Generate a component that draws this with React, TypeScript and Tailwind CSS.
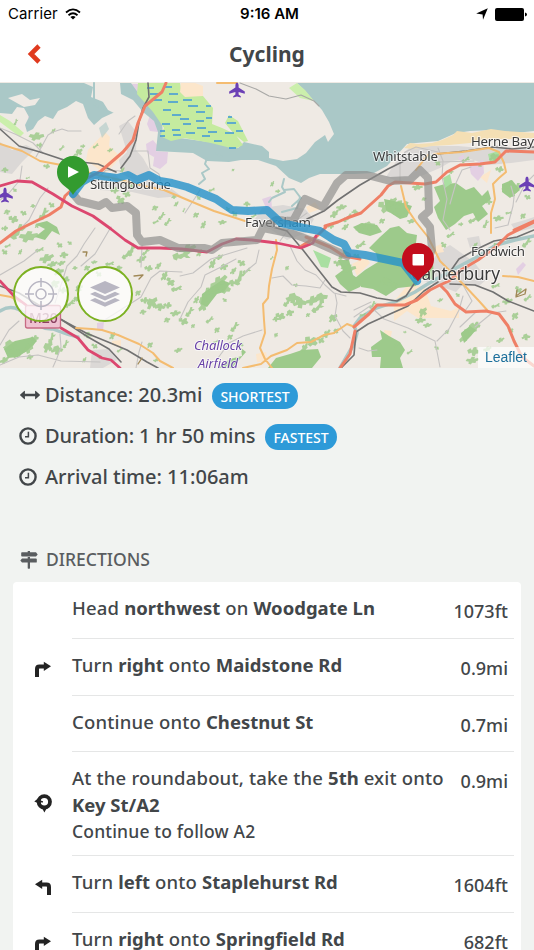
import React from 'react';

type IconProps = { className?: string };

interface Step {
  icon?: React.FC<IconProps>;
  text: React.ReactNode;
  note?: string;
  distance: string;
}

const ArrowsH = ({ className }: IconProps) => (
  <svg viewBox="0 0 22 22" className={className} fill="currentColor">
    <path d="M1.3 10.4 5.2 6.9Q5.9 6.5 5.9 7.3V9.7H16.1V7.3Q16.1 6.5 16.8 6.9L20.7 10.4Q21.3 11 20.7 11.6L16.8 15.1Q16.1 15.5 16.1 14.7V12.3H5.9V14.7Q5.9 15.5 5.2 15.1L1.3 11.6Q.7 11 1.3 10.4Z" />
  </svg>
);

const Clock = ({ className }: IconProps) => (
  <svg viewBox="0 0 18 18" className={className} fill="none" stroke="currentColor">
    <circle cx="9" cy="9" r="7.6" strokeWidth="2.4" />
    <path d="M9.4 4.8V9.7H6" strokeWidth="1.5" />
  </svg>
);

const MapSigns = ({ className }: IconProps) => (
  <svg viewBox="0 0 18 18" className={className} fill="currentColor">
    <path d="M7.7 0h2.3v1.3h6L17.7 3.4 16 5.5H2Q1.2 5.5 1.2 4.8V2Q1.2 1.3 2 1.3h5.7ZM7.7 6h2.3v1.5h6q.8 0 .8.7v2.7q0 .7-.8.7h-6V17q0 .7-.6.7H8.3q-.6 0-.6-.7v-5.4H2L.3 9.5 2 7.5h5.7Z" />
  </svg>
);

const TurnRight = ({ className }: IconProps) => (
  <svg viewBox="0 0 18 18" className={className}>
    <path d="M3 17V9Q3 6.6 5.4 6.6H12" fill="none" stroke="#232323" strokeWidth="4" />
    <path d="M9.8 1.7 17 6.2 9.8 11.1Z" fill="#232323" />
  </svg>
);

const TurnLeft = ({ className }: IconProps) => (
  <svg viewBox="0 0 18 18" className={className}>
    <path d="M15 17V9Q15 6.6 12.6 6.6H6" fill="none" stroke="#232323" strokeWidth="4" />
    <path d="M8.2 1.7 1 6.2 8.2 11.1Z" fill="#232323" />
  </svg>
);

const Roundabout = ({ className }: IconProps) => (
  <svg viewBox="0 3 18 18" className={className}>
    <circle cx="10.3" cy="7.8" r="5.7" fill="none" stroke="#232323" strokeWidth="3.8" />
    <path d="M7.2 12.5h6.4L10.4 18.5ZM.3 7.5 6.5 2.2 7 10.5Z" fill="#232323" />
    <path d="M6.2 7.3l2.6.8" stroke="#232323" strokeWidth="1.6" />
  </svg>
);

const steps: Step[] = [
  { text: <>Head <b>northwest</b> on <b>Woodgate Ln</b></>, distance: '1073ft' },
  { icon: TurnRight, text: <>Turn <b>right</b> onto <b>Maidstone Rd</b></>, distance: '0.9mi' },
  { text: <>Continue onto <b>Chestnut St</b></>, distance: '0.7mi' },
  {
    icon: Roundabout,
    text: <>At the roundabout, take the <b>5th</b> exit onto<br /><b>Key St/A2</b></>,
    note: 'Continue to follow A2',
    distance: '0.9mi',
  },
  { icon: TurnLeft, text: <>Turn <b>left</b> onto <b>Staplehurst Rd</b></>, distance: '1604ft' },
  { icon: TurnRight, text: <>Turn <b>right</b> onto <b>Springfield Rd</b></>, distance: '682ft' },
];

// small woodland patches, [x, y, size]
const copses: [number, number, number][] = [
  [7, 212, 4], [14, 219, 6], [5, 228, 4], [24, 213, 4], [33, 206, 3], [44, 214, 6], [52, 205, 4], [37, 226, 3],
  [18, 232, 8], [28, 236, 9], [8, 246, 3], [5, 252, 4], [20, 252, 3], [40, 250, 4], [46, 258, 7], [52, 264, 5],
  [60, 245, 4], [64, 255, 5], [61, 263, 4], [70, 243, 3], [59, 272, 6], [66, 279, 5], [55, 284, 6], [63, 290, 5],
  [75, 268, 3], [79, 288, 5], [76, 299, 4], [70, 304, 5], [87, 268, 4], [94, 262, 3], [99, 274, 4], [110, 264, 4],
  [119, 268, 4], [127, 255, 5], [132, 250, 6], [141, 259, 5], [146, 252, 4], [149, 268, 5], [158, 266, 4],
  [164, 276, 5], [171, 282, 6], [177, 289, 5], [138, 293, 4], [145, 300, 5], [152, 303, 8], [160, 307, 6],
  [168, 305, 5], [175, 313, 5], [167, 320, 4], [143, 312, 4], [10, 345, 8], [16, 353, 7], [4, 360, 5], [28, 348, 7],
  [35, 338, 5], [30, 357, 4], [48, 347, 7], [57, 350, 7], [52, 338, 5], [66, 344, 4], [88, 335, 5], [95, 346, 4],
  [84, 360, 3], [100, 357, 3], [112, 336, 4], [120, 350, 3], [150, 345, 4], [156, 360, 3], [178, 350, 4],
  [187, 249, 8], [182, 256, 8], [199, 253, 4], [212, 264, 5], [219, 257, 4], [224, 267, 5], [233, 271, 4],
  [242, 263, 5], [240, 278, 7], [247, 271, 4], [218, 282, 9], [225, 288, 8], [232, 283, 5], [213, 290, 6],
  [206, 296, 8], [203, 305, 7], [196, 300, 4], [190, 312, 5], [184, 321, 6], [193, 326, 3], [210, 320, 4],
  [217, 330, 4], [235, 327, 5], [230, 337, 4], [241, 344, 4], [216, 342, 3], [225, 300, 3], [287, 268, 3],
  [288, 302, 5], [293, 298, 8], [300, 303, 8], [290, 313, 5], [281, 316, 6], [276, 319, 4], [312, 300, 7],
  [321, 298, 8], [318, 308, 6], [308, 315, 3], [333, 318, 6], [336, 331, 4], [326, 334, 5], [312, 341, 8],
  [321, 340, 5], [304, 348, 5], [276, 335, 3], [296, 285, 3], [272, 258, 2], [73, 157, 4], [79, 152, 5], [83, 146, 3],
  [36, 136, 7], [40, 145, 4], [16, 122, 3], [53, 131, 3], [62, 148, 3], [96, 146, 3], [110, 150, 3], [122, 170, 3],
  [5, 170, 4], [15, 190, 3], [47, 166, 4], [28, 178, 2], [115, 190, 5], [127, 194, 5], [121, 200, 6], [131, 186, 4],
  [155, 208, 4], [162, 216, 4], [156, 222, 3], [168, 222, 4], [176, 204, 3], [174, 197, 3], [184, 210, 2],
  [196, 215, 4], [203, 225, 4], [222, 222, 4], [228, 209, 3], [247, 204, 4], [235, 214, 4], [254, 216, 3],
  [199, 198, 3], [212, 190, 3], [233, 170, 2], [272, 184, 3], [278, 191, 3], [341, 207, 5], [334, 214, 5],
  [348, 218, 5], [355, 212, 4], [345, 227, 4], [331, 226, 4], [361, 227, 6], [369, 226, 7], [386, 207, 9],
  [393, 202, 6], [399, 212, 7], [404, 205, 8], [411, 221, 4], [382, 221, 4], [417, 187, 5], [424, 199, 3],
  [430, 157, 3], [438, 163, 4], [451, 172, 3], [466, 160, 4], [480, 165, 3], [494, 157, 6], [500, 169, 5],
  [508, 186, 6], [516, 190, 7], [528, 197, 4], [489, 202, 4], [474, 220, 5], [486, 224, 4], [498, 218, 5],
  [509, 213, 3], [523, 216, 4], [461, 224, 3], [451, 235, 4], [444, 245, 4], [475, 245, 3], [496, 245, 3],
  [527, 243, 5], [519, 290, 5], [528, 298, 4], [496, 286, 4], [507, 301, 5], [496, 306, 4], [515, 316, 5],
  [511, 330, 4], [526, 337, 5], [500, 340, 4], [471, 329, 8], [464, 336, 7], [476, 325, 6], [474, 351, 7],
  [472, 360, 6], [487, 349, 4], [447, 332, 3], [423, 312, 6], [420, 320, 5], [427, 325, 4], [437, 348, 3],
  [410, 352, 3], [397, 345, 3], [405, 332, 2], [440, 300, 3], [458, 295, 3], [373, 305, 4], [363, 315, 3],
  [386, 281, 6], [394, 285, 4], [361, 245, 5], [357, 256, 4], [343, 255, 5], [348, 268, 7], [338, 263, 5],
];

const copseShapes = [
  'M-8 1-6-3-2-2 0-6 4-5 3-2 8-3 9 1 5 3 4 6 0 5-2 8-5 6-4 3Z',
  'M-4-9 0-7-1-3 3-4 5-1 3 2 4 6 1 8-1 5-4 6-5 2-3-1-6-4Z',
  'M-9-2-4-5-3-2 2-4 6-7 8-4 5-1 8 3 4 3 2 1-1 4-4 3-5 6-8 4Z',
  'M-3-6 2-7 3-3 7 0 5 4 2 3 1 8-3 6-2 2-6 3-7-1-4-2Z',
];

const marshDashes =
  'M147 88h7M164 87h8M150 94h9M169 94h9M153 100h9M168 102h10M183 100h9M188 106h10M206 106h5M163 110h8M172 115h9M196 112h9M180 119h9M162 124h8M183 124h8M196 121h8M206 118h6M172 130h8M197 128h9M186 133h9M208 132h9M160 131h5M160 136h5M173 135h8M202 136h8M214 141h8M227 123h9M225 133h9M236 131h7M228 117h4M229 148h7';

const Plane = ({ x, y }: { x: number; y: number }) => (
  <g transform={`translate(${x} ${y})`}>
    <path
      d="M0-7.5Q1.4-7.2 1.6-5V-2.4L7.8 1.6V3.8L1.6 2V4.5L3.8 6.2V7.5L0 6.6-3.8 7.5V6.2L-1.6 4.5V2L-7.8 3.8V1.6L-1.6-2.4V-5Q-1.4-7.2 0-7.5Z"
      fill="#6b40b5"
    />
  </g>
);

const RouteMap = () => (
  <svg viewBox="0 82 534 286" className="block h-[286px] w-full" strokeLinejoin="round" strokeLinecap="round">
    <rect y="82" width="534" height="286" fill="#efeae4" />

    {/* built-up areas and fields */}
    <g fill="#dbd8d6">
      <path d="M0 142 12 150 26 145 35 149 22 162 12 174 0 172ZM119 126 128 121 137 133 136 150 143 158 151 172 158 178 150 186 134 180 122 174 119 160 127 152ZM91 177 115 174 124 184 168 186 181 196 158 198 132 192 100 190Z" />
      <path d="M262 208 283 205 305 209 314 219 306 233 287 240 270 229 252 224ZM397 160 409 148 430 146 458 146 480 148 499 145 514 148 534 146V160L511 163 489 165 470 159 452 161 440 168 421 176 407 184 398 181 386 177Z" />
      <path d="M438 252 450 245 460 252 474 262 487 279 479 286 463 284 456 292 440 286 424 281 430 265ZM467 238 479 236 481 246 470 248ZM92 350 109 349 117 360 103 368H90ZM511 224 525 220 534 217V228L516 232Z" />
    </g>
    <g fill="#fce6cb">
      <path d="M88 150 105 132 110 137 109 146 121 157 105 174 86 160ZM306 207 315 202 320 209 309 213Z" />
      <path d="M394 301 408 285 424 286 431 306 451 311 459 307 459 318 436 318 418 318 407 311 394 321ZM352 264 366 257 370 263 357 276ZM384 330 392 331 390 341 385 340ZM112 341 121 340 121 348 112 345ZM256 354 266 352 268 361 257 362ZM430 249 441 244 444 252 432 254ZM480 177 491 170 487 183Z" />
    </g>
    <g fill="#e3cfe3">
      <path d="M150 115 158 119 158 132 150 131 147 124ZM146 144 153 140 158 146 154 157 147 153ZM155 151 168 152 167 163 160 169 153 166ZM127 84 145 84 143 93 133 90ZM30 112 37 113 34 121 28 118ZM469 165 483 160 484 173 478 181 471 174ZM458 158 464 154 463 163ZM516 269 523 262 526 265 518 275ZM262 199 271 196 272 208 266 208ZM97 323 104 322 103 331 97 330Z" />
    </g>

    {/* water */}
    <g fill="#aac8c7">
      <path d="M0 83H84L93 87 91 97 106 103 114 107 115 112 102 118 94 125 88 118 83 104 76 101 67 107 58 111 53 119 45 116 38 121 33 129 27 132 25 125 29 117 24 108 17 107 12 114 0 113Z" />
      <path d="M120 83H131L139 94 153 103 162 121 163 137 180 138 216 143 238 148 244 142 262 146 269 152 269 158 283 161 297 159 306 153 315 142 325 135 328 142 334 134 329 122 322 110 306 92 297 83H534V131L505 134 493 130 470 131 456 133 438 141 416 143 407 144 397 155 387 166 374 173 354 174 320 174 309 178 301 183 289 178 276 166 258 160 241 160 229 162 207 161 193 153 156 151 158 132 154 121 143 112 133 100 121 94Z" />
      <path d="M99 128 106 122 109 129 102 138Z" opacity=".6" />
    </g>
    <path d="M8 98 22 94 30 100 40 98 35 105 24 107ZM98 94 108 98 119 105 128 112 120 116 108 110Z" fill="#efeae4" />
    <path d="M404 148 410 143 418 144 432 143 442 140 453 135 457 131 472 133 491 129 505 131 520 132 534 133V138L510 139 490 139 470 143 449 145 432 146 413 149Z" fill="#f4dfb4" />
    <g fill="none" stroke="#aac8c7" strokeWidth="2">
      <path d="M207 158 205 164 209 169 202 173 205 179 199 184M284 179 282 187 285 192 272 198 269 202M284 190 294 189 300 197 297 208 282 212M222 157 216 153M94 83 94 104 103 110M301 198 292 206" />
      <path d="M0 311Q14 302 27 316T53 329Q68 335 78 337M340 368 347 356 354 344 357 333 354 326 360 318 376 308 395 302 415 292 426 285 438 278 456 268 477 257 496 245 515 240 534 236" strokeWidth="3.5" />
    </g>

    {/* marsh */}
    <path d="M138 83H180L182 94 203 96 213 108 212 124 222 128 235 134 243 145 235 149 211 143 184 138 171 141 160 136 164 128 153 112 137 94ZM225 123 229 115 238 121 248 141 244 142 234 134Z" fill="#c5eb9f" />
    <path d="M289 88 297 83 305 90 314 101 300 98ZM0 115 10 121 24 133 20 137 0 122Z" fill="#cbefac" />
    <path d="M181 83 180 92 185 97 203 96 203 86 195 83Z" fill="#fce6cb" />
    <path d={marshDashes} stroke="#3e97dc" strokeWidth="1.3" strokeLinecap="butt" />

    {/* woodland */}
    <g fill="#9dca8b">
      <path d="M434 187 445 184 456 183 466 190 474 187 482 196 488 190 491 199 482 206 488 214 478 222 473 213 464 216 455 224 446 230 438 218 434 207 440 201ZM384 199 399 202 412 206 407 217 400 219 386 210ZM502 184 512 180 520 190 510 198 502 192Z" />
      <path d="M380 237 390 228 399 226 407 233 417 235 416 243 423 248 417 254 433 262 434 280 420 276 416 286 398 288 386 296 373 289 361 287 355 278 365 270 378 262 376 253 369 248Z" />
      <path d="M371 347 382 339 380 330 389 336 400 342 405 350 400 358 403 368H380L381 357 372 357ZM338 260 349 260 353 275 360 280V287L349 292 340 284 335 276 343 270ZM268 368 276 358 290 354 302 350 318 349 321 357 312 368ZM461 333 470 326 476 330 470 337 464 343ZM242 356 241 348 246 352 232 368H218L230 359ZM353 227 362 223 377 225 382 232 370 236 359 233Z" />
      <path d="M33 337 37 341 28 350 18 357 8 358 4 349 15 341ZM45 229 35 224 47 221 57 227 60 235 52 231 45 240 35 237ZM202 294 213 286 222 280 230 283 224 292 217 294 207 307 201 304Z" />
      <path d="M313 250 320 253 331 258 328 268 321 267Z" fill="#a9dfa1" />
      <path d="M443 178 450 174 452 183 445 188ZM488 154 499 151 500 160 490 163Z" fill="#a9dfa1" />
      <g opacity=".85">
        {copses.map(([x, y, s]) => (
          <path
            key={`${x}-${y}`}
            transform={`translate(${x} ${y}) rotate(${-((x * 7 + y * 3) % 60)}) scale(${s / 7.5} ${s / 11})`}
            d={copseShapes[(x + y) % 4]}
          />
        ))}
      </g>
    </g>

    {/* minor roads */}
    <g fill="none" stroke="#c5c3c2" strokeWidth="1.1">
      <path d="M0 128 15 134 33 143 43 153M36 157 48 135 53 132 62 129 68 131 81 131M48 188 40 198 29 220 19 230M0 200 9 193 20 180 22 166M119 134 128 121 135 116M132 151 148 151 150 168 159 174 161 183M121 171 106 170 98 178" />
      <path d="M95 228 84 244 77 256 67 266 62 282 55 303M103 321 122 309 141 297 151 278 160 271 182 272M142 246 141 267M0 345 9 330 19 321M0 365 19 357 38 355 61 361 100 362M53 367 57 358 61 347 60 334M136 368 139 352 142 342" />
      <path d="M0 275 24 261 38 250M81 266 95 254 111 227M180 276 193 273 211 259 247 248M180 319 188 302 201 287 205 275 219 268 236 259M218 358 229 343 243 336 262 330M259 250 256 263 245 272M290 246 297 261 305 270 316 275 325 285 334 293 346 296M272 278 283 276 292 285 306 286 320 288 325 280M335 293 337 303 335 316 343 331 350 338M185 213 195 198 200 190M354 317 370 306 384 319 408 328 435 341 440 367M437 341 449 329 459 310 463 296M463 285 472 301 465 311M475 327 492 313 506 311" />
      <path d="M438 148 443 161 442 177 447 199 443 220 450 230M511 186 514 197 513 206 508 225 495 228M471 167 462 170 456 183 450 204M534 175 525 184 516 202M400 181 400 165 405 152 416 147 438 152M440 162 474 161M354 310 371 302M359 348 368 351 377 350M460 327 477 311" />
      <path d="M280 241 293 223 307 213" />
      <path d="M240 83 256 89 269 96 286 99 301 95 314 101 319 106" stroke="#a8a8a6" />
    </g>

    {/* railways */}
    <g fill="none" stroke="#717171" strokeWidth="1.6">
      <path d="M0 129 19 146 40 152 64 160 98 164 116 172M121 168 130 156 136 140 139 122 143 108 149 97 148 83M307 219 324 211 338 200 360 185 388 169 408 159M0 286 19 293 37 304 62 320 88 337 109 349 121 362" />
      <path d="M62 320 86 333 108 342 127 350 147 362 158 368M266 225 287 231 303 250 317 268 332 287 341 292 360 293 377 298 397 301 406 296 414 284M341 368 354 355 356 332 368 324 390 314 408 306 424 291 438 282M447 276 459 259 475 250 494 241 517 237 534 230M450 284 475 285 493 292 508 301 534 311M437 154 466 151 493 147 512 149 534 147" />
    </g>

    {/* A roads */}
    <g fill="none" stroke="#f4bc70" strokeWidth="2">
      <path d="M0 144 22 151 40 161 72 167 93 174 116 179 144 186 164 190 190 201 214 211 245 221M0 295 11 297 21 302M76 328 92 329 102 330 118 335 139 344 153 353 160 361 173 368M276 240 277 250 272 269 269 286 268 298 263 304 264 320 265 333 260 348 265 359 272 368M243 368 261 364 271 356 287 350 297 343 311 342 324 335 334 333 347 324 355 327" />
      <path d="M217 83H237M434 154 462 152 489 148 499 152 504 163 506 172 499 178 493 184 495 199 491 213 491 233M401 186 406 207 416 222 428 237 440 261 464 285 479 301 488 311M503 276 518 277 534 281M416 170 423 161 428 155" />
    </g>
    <g fill="none" stroke="#ef7f66" strokeWidth="3">
      <path d="M166 83 162 92 145 106 138 123 133 140 123 152 101 171 80 182 65 196 61 207 49 215 30 224 16 231 0 243" />
      <path d="M325 226 338 222 347 218 361 213 381 195 388 186 395 182 425 184 436 182 447 172 460 165 480 164 495 162 506 151 534 152M300 247 316 237 326 227M306 237 330 247 344 256 360 259M514 230 534 221" />
      <path d="M354 327 369 314 377 305 405 305 417 300 430 290 440 285 447 292 455 304 466 312 486 311 499 314 508 326 514 341 522 357 534 366M440 285 449 281 461 270 478 260 497 246 508 235 534 222M340 368 350 354 355 331" />
    </g>
    <g fill="none" stroke="#dc476f" strokeWidth="2.8">
      <path d="M0 186 17 181 32 182 53 194 72 206 93 216 111 229 125 240 138 248 160 248 182 249 207 252 222 244 236 239 252 240 277 243 301 248 313 243 316 236" />
      <path d="M0 281 14 296 26 305M61 328 78 338 88 350 102 358 111 360 120 368" />
    </g>

    <rect x="25.5" y="305.5" width="35" height="22.5" rx="2" fill="#efc2d1" stroke="#c76b84" strokeWidth="1.3" />
    <text x="29" y="323" className="font-['Noto_Sans'] text-[14px] font-medium" fill="#8c4060">M20</text>
    <Plane x={237} y={90} />
    <Plane x={5} y={195} />
    <Plane x={527} y={184} />
    <path d="M516 296 526 289 525 294 516 297 517 290ZM83 252 87 252 86 256M134 276 143 275 139 279M138 364 142 358" fill="none" stroke="#a08957" strokeWidth="1.3" />

    <g
      className="font-['Noto_Sans'] text-[13.3px]"
      fill="#3a3a3a"
      stroke="#fff"
      strokeOpacity=".65"
      strokeWidth="2"
      paintOrder="stroke"
    >
      <text x="90" y="189" textLength="81">Sittingbourne</text>
      <text x="245" y="227" textLength="66">Faversham</text>
      <text x="373" y="161" textLength="65">Whitstable</text>
      <text x="471" y="145.5" textLength="63">Herne Bay</text>
      <text x="471" y="256" textLength="54">Fordwich</text>
      <text x="411" y="280" textLength="89" className="text-[17.3px]">Canterbury</text>
      <g fill="#6842a8" className="text-[13px] italic">
        <text x="194" y="350" textLength="48">Challock</text>
        <text x="198" y="367.5" textLength="40">Airfield</text>
      </g>
    </g>

    {/* alternative route, chosen route */}
    <path
      d="M74 195 79 201 99 206 106 202 112 208 127 206 136 213 137 235 142 242 160 240 178 248 204 248 212 250 222 243 257 240 263 228 293 234 318 243 347 256M264 228 276 220 293 221 305 199 323 207 337 183 346 175 367 175 390 181 410 180 420 170 428 178 429 211 422 217 430 227 432 250 419 276"
      fill="none"
      stroke="#8e8e8c"
      strokeOpacity=".68"
      strokeWidth="8"
    />
    <path
      d="M73 194 82 182 94 175 117 178 128 175 137 180 149 175 160 181 172 183 187 187 216 199 232 210 248 211 267 210 281 223 304 228 320 231 334 240 344 244 349 253 365 255 403 263 417 281"
      fill="none"
      stroke="#2491c9"
      strokeOpacity=".8"
      strokeWidth="8"
    />

    <g>
      <path d="M73 195Q71 191 65 186.5C59 182 57 177 57 172A16 16 0 0 1 89 172C89 177 87 182 81 186.5Q75 191 73 195Z" fill="#339b2f" />
      <path d="M68 166.2V177.8L79 172Z" fill="#fff" />
      <path d="M418 281.5Q416 278 410 273.5C404 269 402 264 402 259A16 16 0 0 1 434 259C434 264 432 269 426 273.5Q420 278 418 281.5Z" fill="#c30d1d" />
      <rect x="412.5" y="254" width="11.5" height="11.5" rx="1" fill="#fff" />
    </g>
  </svg>
);

const Badge = ({ children }: { children: React.ReactNode }) => (
  <span className="ml-2.5 mt-[3px] flex h-[26px] items-center rounded-full bg-[#2d9ad8] px-2 text-[14px] font-medium text-white">
    {children}
  </span>
);

export default function App() {
  return (
    <div className="flex h-[950px] w-[534px] flex-col overflow-hidden bg-[#f1f3f1] font-['Noto_Sans',sans-serif] text-[#424649]">
      <header className="bg-white">
        <div className="grid h-7 grid-cols-3 items-center pl-2 pr-[7px] font-['Inter',sans-serif] text-[15px] text-black">
          <div className="flex items-center gap-[7px]">
            <span className="tracking-[.1px]">Carrier</span>
            <svg viewBox="0 0 16 12" className="h-3 w-4" fill="none" stroke="currentColor" strokeWidth="1.8">
              <path d="M1 4.5Q8-1.7 15 4.5M3.5 7.2Q8 3.4 12.5 7.2" />
              <path d="M8 11.5 5.4 8.9Q8 6.9 10.6 8.9Z" fill="currentColor" stroke="none" />
            </svg>
          </div>
          <span className="pl-1 text-center text-[15px] font-semibold">9:16 AM</span>
          <div className="flex items-center justify-end gap-[7px]">
            <svg viewBox="0 0 12 12" className="size-3" fill="currentColor">
              <path d="M11.8.2 7 11.8 6.6 6.4.2 5.4Z" />
            </svg>
            <svg viewBox="0 0 32 13" className="h-[13px] w-8" fill="currentColor">
              <rect width="29" height="13" rx="2" />
              <path d="M30 4.5Q32 5 32 6.5T30 8.5Z" />
            </svg>
          </div>
        </div>
        <div className="grid h-[54px] grid-cols-[80px_1fr_80px] items-center">
          <svg viewBox="0 0 14 22" className="-mt-0.5 ml-[27px] h-[22px] w-3.5" fill="none" stroke="#e03a1e" strokeWidth="4.6">
            <path d="M12 3 4 11 12 19" />
          </svg>
          <h1 className="text-center text-[21px] font-bold">Cycling</h1>
        </div>
      </header>

      <div className="relative shrink-0">
        <RouteMap />
        <div className="absolute left-[13px] top-[184px] flex gap-2">
          <button className="flex size-14 items-center justify-center rounded-full border-[2.5px] border-[#7cb122] bg-white/75">
            <svg viewBox="0 0 32 32" className="size-8" fill="none" stroke="#b8b6c2" strokeWidth="1.5">
              <circle cx="16" cy="16" r="12.5" />
              <circle cx="16" cy="16" r="5" />
              <path d="M16 0v9M16 23v9M0 16h9M23 16h9" />
            </svg>
          </button>
          <button className="flex size-14 items-center justify-center rounded-full border-[2.5px] border-[#7cb122] bg-white/75">
            <svg viewBox="0 0 32 28" className="h-7 w-8" fill="#b8b6c2">
              <path d="M16 1 31 7.5 16 14 1 7.5ZM1 14 6 11.8 16 16.3 26 11.8 31 14 16 20.5ZM1 20.3 6 18.1 16 22.6 26 18.1 31 20.3 16 26.8Z" />
            </svg>
          </button>
        </div>
        <a className="absolute bottom-0 right-0 bg-white/70 px-[7px] pb-px font-['Liberation_Sans'] text-[14px] leading-5 text-[#1c6f9b]">
          Leaflet
        </a>
      </div>

      <section className="flex h-[158px] shrink-0 flex-col pl-[19px] pt-[6px] text-[20px] font-medium leading-[41px]">
        <div className="flex h-[41px] items-center">
          <ArrowsH className="mr-1 size-[22px]" />
          <span>Distance: 20.3mi</span>
          <Badge>SHORTEST</Badge>
        </div>
        <div className="flex h-[41px] items-center">
          <Clock className="mr-2 size-[18px]" />
          <span className="tracking-[-.1px]">Duration: 1 hr 50 mins</span>
          <Badge>FASTEST</Badge>
        </div>
        <div className="flex h-[41px] items-center">
          <Clock className="mr-2 size-[18px]" />
          <span>Arrival time: 11:06am</span>
        </div>
      </section>

      <h2 className="flex h-14 shrink-0 items-center pl-5 pt-[10px] text-[17.5px] font-medium text-[#5a5d60]">
        <MapSigns className="mr-2 mt-0.5 size-[18px]" />
        DIRECTIONS
      </h2>

      <ul className="mx-[13px] rounded-t bg-white pr-[7px]">
        {steps.map(({ icon: Icon, text, note, distance }, i) => (
          <li key={i} className="flex">
            <div className="flex w-[59px] items-center justify-center pt-1">{Icon && <Icon className="size-[18px] overflow-visible" />}</div>
            <div className="flex min-h-[56.8px] flex-1 justify-between border-b border-[#e5e6e6] pb-2 pr-1.5 pt-3">
              <div className="whitespace-nowrap text-[18.5px] font-medium leading-[27px] tracking-[.18px] [&_b]:tracking-normal">
                {text}
                {note && <p className="pb-[3px] text-[17.5px] leading-[26px]">{note}</p>}
              </div>
              <span className="pt-1 text-[18px] font-medium leading-[27px]">{distance}</span>
            </div>
          </li>
        ))}
      </ul>
    </div>
  );
}
